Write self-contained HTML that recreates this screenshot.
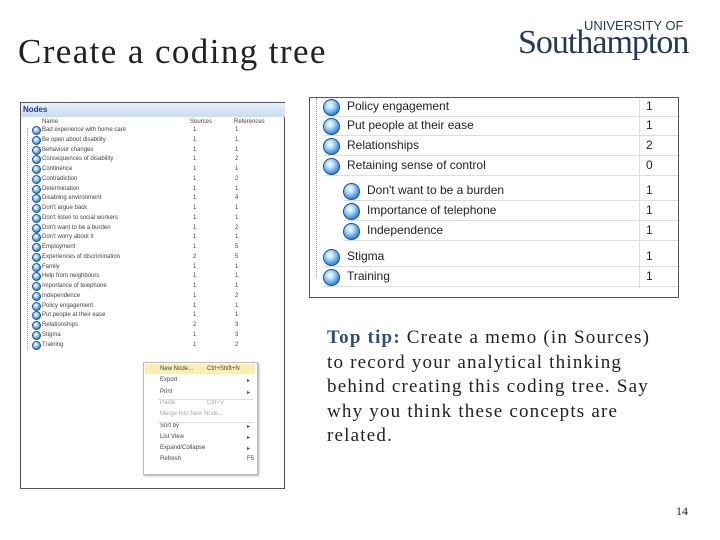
<!DOCTYPE html>
<html><head><meta charset="utf-8"><style>
body{margin:0;width:720px;height:540px;background:#fff;position:relative;overflow:hidden;font-family:"Liberation Sans",sans-serif}
.a{position:absolute;white-space:nowrap}
.ic{position:absolute;border-radius:50%;background:radial-gradient(circle at 40% 35%,#fff 0,#bfe3ff 25%,#3a8ee0 70%,#1b5fb0 100%);border:1px solid #1a4f9a}
.sm{font-size:6px;color:#444}
</style></head><body>
<div class="a" style="left:18px;top:32px;font-family:'Liberation Serif',serif;font-size:35px;letter-spacing:1.4px;color:#222">Create a coding tree</div>
<div class="a" style="left:584px;top:18px;font-family:'Liberation Sans',sans-serif;font-size:13px;color:#1f3a5a">UNIVERSITY OF</div>
<div class="a" style="left:518px;top:24px;font-family:'Liberation Serif',serif;font-size:34px;color:#1f3a5a;letter-spacing:-1px">Southampton</div>

<div class="a" style="left:20px;top:102px;width:263px;height:385px;border:1px solid #555;background:#fff"></div>
<div class="a" style="left:21px;top:103px;width:262px;height:14px;background:linear-gradient(#e8f1fb,#c9dcf2);font-size:8px;font-weight:bold;color:#1f3f7f;line-height:14px;padding-left:2px">Nodes</div>
<div class="a sm" style="left:42px;top:119px">Name</div>
<div class="a sm" style="left:190px;top:119px">Sources</div>
<div class="a sm" style="left:234px;top:119px">References</div>
<div id="L"></div>

<div class="a" style="left:143px;top:362px;width:113px;height:111px;background:#fff;border:1px solid #bbb;box-shadow:1px 1px 2px #aaa"></div>
<div class="a" style="left:145px;top:364px;width:110px;height:10px;background:#fbeeb0"></div>
<div id="M"></div>

<div class="a" style="left:309px;top:97px;width:368px;height:199px;border:1px solid #555;background:#fff;overflow:hidden" id="R"></div>

<div class="a" style="left:327px;top:326px;font-family:'Liberation Serif',serif;font-size:19px;letter-spacing:1.2px;line-height:24.5px;color:#222"><b style="color:#2a4f7f">Top tip:</b> Create a memo (in Sources)<br>to record your analytical thinking<br>behind creating this coding tree. Say<br>why you think these concepts are<br>related.</div>
<div class="a" style="left:676px;top:504px;font-family:'Liberation Serif',serif;font-size:12px;color:#222">14</div>
<script>
var n=[["Bad experience with home care",1,1],["Be open about disability",1,1],["Behaviour changes",1,1],["Consequences of disability",1,2],["Continence",1,1],["Contradiction",1,2],["Determination",1,1],["Disabling environment",1,4],["Don't argue back",1,1],["Don't listen to social workers",1,1],["Don't want to be a burden",1,2],["Don't worry about it",1,1],["Employment",1,5],["Experiences of discrimination",2,5],["Family",1,1],["Help from neighbours",1,1],["Importance of telephone",1,1],["Independence",1,2],["Policy engagement",1,1],["Put people at their ease",1,1],["Relationships",2,3],["Stigma",1,3],["Training",1,2]];
var h='';n.forEach(function(r,i){var y=127+i*9.75;h+='<div class="ic" style="left:32px;top:'+(y-1)+'px;width:7px;height:7px"></div><div class="a sm" style="left:42px;top:'+y+'px">'+r[0]+'</div><div class="a sm" style="left:193px;top:'+y+'px">'+r[1]+'</div><div class="a sm" style="left:235px;top:'+y+'px">'+r[2]+'</div>';});
h+='<div class="a" style="left:27px;top:128px;width:0;height:222px;border-left:1px dotted #999"></div>';
document.getElementById('L').innerHTML=h;
var m=[["New Node...","Ctrl+Shift+N"],["Export","▸"],["Print","▸"],["Paste","Ctrl+V"],["Merge Into New Node...",""],["Sort by","▸"],["List View","▸"],["Expand/Collapse","▸"],["Refresh","F5"]];
h='';m.forEach(function(r,i){var y=366+i*11.3;var c=(i==3||i==4)?'#aaa':'#444';h+='<div class="a" style="left:160px;top:'+y+'px;font-size:6px;color:'+c+'">'+r[0]+'</div><div class="a" style="left:'+(r[1].length>2?207:247)+'px;top:'+y+'px;font-size:6px;color:'+c+'">'+r[1]+'</div>';});
h+='<div class="a" style="left:158px;top:399px;width:96px;border-top:1px solid #ddd"></div><div class="a" style="left:158px;top:422px;width:96px;border-top:1px solid #ddd"></div>';
document.getElementById('M').innerHTML=h;
var rr=[["Policy engagement","1",0,-1],["Put people at their ease","1",0,18],["Relationships","2",0,38],["Retaining sense of control","0",0,58],["Don't want to be a burden","1",1,83],["Importance of telephone","1",1,103],["Independence","1",1,123],["Stigma","1",0,149],["Training","1",0,169]];
h='';rr.forEach(function(r){var x=r[2]?20:0;h+='<div class="a" style="left:'+(14+x)+'px;top:'+r[3]+'px;width:360px;height:19px;border-bottom:1px solid #ddd"></div><div class="ic" style="left:'+(13+x)+'px;top:'+(r[3]+2)+'px;width:15px;height:15px"></div><div class="a" style="left:'+(37+x)+'px;top:'+(r[3]+2)+'px;font-size:12px;color:#222">'+r[0]+'</div><div class="a" style="left:336px;top:'+(r[3]+2)+'px;font-size:12px;color:#222">'+r[1]+'</div>';});
h+='<div class="a" style="left:329px;top:0;height:190px;border-left:1px solid #ddd"></div><div class="a" style="left:6px;top:0;height:180px;border-left:1px dotted #999"></div>';
document.getElementById('R').innerHTML=h;
</script>
</body></html>
